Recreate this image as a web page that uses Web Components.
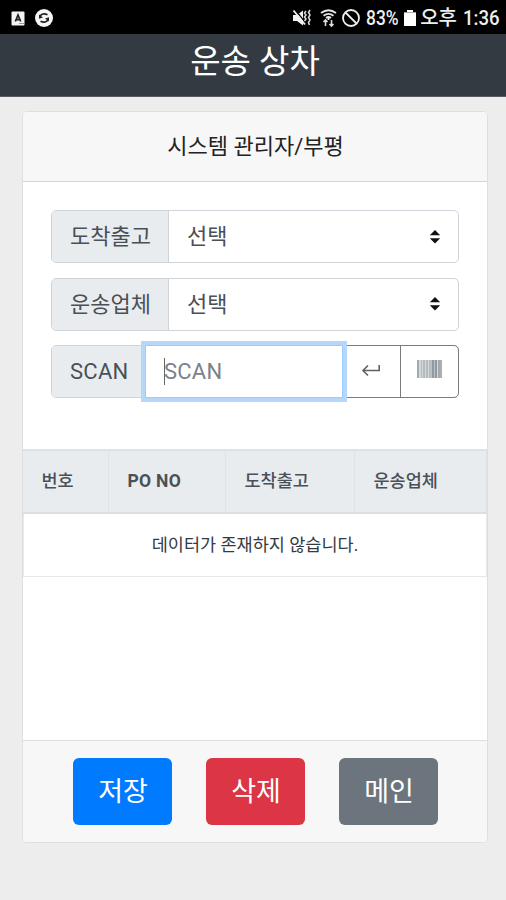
<!DOCTYPE html>
<html lang="ko">
<head>
<meta charset="utf-8">
<title>운송 상차</title>
<style>
html,body{margin:0;height:100%}
body{background:#ededed;font-family:Roboto,"Noto Sans CJK KR",sans-serif;color:#212529;overflow:hidden}
</style>
</head>
<body>
<shipping-app></shipping-app>
<script>
function define(name, html) {
  const template = document.createElement('template');
  template.innerHTML = html;
  customElements.define(name, class extends HTMLElement {
    constructor() {
      super();
      this.attachShadow({mode: 'open'}).appendChild(template.content.cloneNode(true));
    }
  });
}

define('status-bar', `
<style>
:host{display:flex;box-sizing:border-box;height:34px;background:#000;color:#eee;align-items:center;padding:2px 6px 0 11px;font-size:20px;line-height:30px;white-space:nowrap}
svg{display:block;flex:none}
.gap{flex:1}
.pct{width:36px;margin-left:5px;display:flex;font-weight:500}
.ampm{margin-left:4px;font-weight:500}
.time{margin-left:6px;width:37px;display:flex;font-weight:500}
.fit{transform:scaleX(.87);transform-origin:0 50%}
</style>
<svg width="14" height="15" viewBox="0 0 14 15"><rect x=".5" y=".5" width="13" height="14" rx="1" fill="#f4f4f4"/><path d="M4.300 10.500 7 4l2.700 6.500M5.200 8.600h3.600" stroke="#222" stroke-width="1.700" fill="none"/><path d="M8 12.500h5" stroke="#999"/></svg>
<svg width="20" height="20" viewBox="0 0 20 20" style="margin-left:9px"><circle cx="10" cy="10" r="9" fill="#f6f6f6"/><path d="M6 8.500c1-2.500 4-3.500 7.500-1.800M14 11.500c-1 2.500-4 3.500-7.500 1.800" stroke="#222" stroke-width="1.700" fill="none"/><path d="M5 6.500v4.300l4-1.300zM15 13.500V9.200l-4 1.300z" fill="#222"/></svg>
<span class="gap"></span>
<svg width="20" height="20" viewBox="0 0 20 20"><path d="M1 7h4l6-4.500v15L5 13H1z" fill="#f2f2f2"/><path d="m3 1.500 11 14" stroke="#000" stroke-width="1.300"/><path d="m1.500 2.500 11.500 14" stroke="#eee" stroke-width="1.900"/><path d="m14 3-1.500 2 1.500 2-1.500 2 1.500 2-1.500 2M18 2l-1.500 2.500 1.500 2.500-1.500 2.500 1.500 2.500-1.500 2.500 1 2.500" stroke="#ddd" stroke-width="1.500" fill="none"/></svg>
<svg width="17" height="20" viewBox="0 0 17 20" style="margin-left:8px"><path d="M1 5q7.500-5.500 15 0M3.500 7.700q5-3.700 10 0M6 10q2.500-2 5 0" stroke="#e5e5e5" stroke-width="1.800" fill="none"/><path d="M8.500 9v3" stroke="#eee" stroke-width="2"/><path d="M5.500 18v-6M3.500 14l2-2 2 2M11.500 12v6M9.500 16l2 2 2-2" stroke="#ddd" stroke-width="1.600" fill="none"/></svg>
<svg width="20" height="20" viewBox="0 0 20 20" style="margin-left:4px"><circle cx="10" cy="10" r="8" stroke="#eee" stroke-width="1.800" fill="none"/><path d="m4.500 4.500 11 11" stroke="#eee" stroke-width="1.800"/></svg>
<span class="pct"><span class="fit">83%</span></span>
<svg width="12" height="18" viewBox="0 0 12 18" style="margin-left:2px"><path d="M0 3h3V1h6v2h3v14H0z" fill="#fff"/><path d="M0 3.500h12" stroke="#aaa"/></svg>
<span class="ampm">오후</span><span class="time"><span class="fit" style="transform:scaleX(.93)">1:36</span></span>
`);

define('app-title', `
<style>
:host{display:flex;box-sizing:border-box;height:63px;background:#343a42;color:#fff;justify-content:center;font-size:33px;line-height:50px;padding:2.500px 0 0 4px;border-bottom:1px solid #565b62}
</style><slot></slot>`);

define('data-card', `
<style>
:host{display:flex;flex-direction:column;box-sizing:border-box;margin:14px 18px 0 22px;height:732px;background:#fff;border:1px solid #dfdfdf;border-radius:5px;overflow:hidden}
header{box-sizing:border-box;height:70px;flex:none;background:#f7f7f7;border-bottom:1px solid #d6d6d6;text-align:center;font-size:22px;line-height:69px;color:#222;padding-left:1px}
main{flex:1}
footer{box-sizing:border-box;height:102px;flex:none;background:#f7f7f7;border-top:1px solid #dedede;display:flex;gap:34px;padding:17px 0 0 50px}
</style>
<header><slot name="header"></slot></header><main><slot></slot></main><footer><slot name="footer"></slot></footer>`);

define('input-row', `
<style>
:host{display:flex;box-sizing:border-box;height:53px;border:1px solid #ced4da;border-radius:5px;background:#fff;font-size:22px;line-height:51px;color:#495057;position:relative}
.label{box-sizing:border-box;background:#e9ecef;border-right:1px solid #ced4da;padding:0 17px 0 18px;border-radius:4px 0 0 4px;white-space:nowrap}
</style><span class="label"><slot name="label"></slot></span><slot></slot>`);

define('select-box', `
<style>
:host{display:flex;flex:1;align-items:center;justify-content:space-between;padding:0 17.500px 0 18px}
svg{display:block}
</style><slot></slot><svg width="12" height="14" viewBox="0 0 12 14"><path d="M.8 5.200 6 0l5.200 5.200zM.8 8.300h10.400L6 13.500z" fill="#111"/></svg>`);

define('scan-input', `
<style>
:host{display:block;box-sizing:border-box;width:198px;margin:-1px 0 -1px -1.500px;height:53px;background:#fff;border:1px solid #9bcdfc;box-shadow:0 0 0 4px #b4d7fa;padding-left:18px;line-height:51px;color:#7b8188;position:relative;letter-spacing:.25px}
i{position:absolute;left:18px;top:12px;width:1px;height:27px;background:#666}
</style><i></i><slot></slot>`);

define('icon-button', `
<style>
:host{display:flex;box-sizing:border-box;margin:-1px 0;height:53px;width:58px;border:1px solid #777c81;border-left-width:0;align-items:center;justify-content:center;padding-bottom:3px}
:host([last]){flex:1;border-left-width:1px;margin-left:-1px;margin-right:-1px;border-radius:0 5px 5px 0;padding-bottom:5px}
</style><slot></slot>`);

define('data-table', `
<style>
:host{display:block;margin-top:51px;color:#343a40;font-size:17.500px}
.head{display:grid;grid-template-columns:86px 117px 129px 1fr;box-sizing:border-box;height:65px;background:#e9ecef;border-top:2px solid #dee2e5;border-bottom:2px solid #dbdfe2;line-height:60px;font-weight:500;color:#495057}
.head span{padding-left:18.500px;border-right:1px solid #dfe3e7}
.head span:last-child{border-color:#dee2e6}
.empty{box-sizing:border-box;height:63px;border:1px solid #e6e8ea;border-top:0;text-align:center;line-height:62px}
</style>
<div class="head"><span>번호</span><span style="font-weight:700;letter-spacing:.3px">PO NO</span><span>도착출고</span><span>운송업체</span></div>
<div class="empty">데이터가 존재하지 않습니다.</div>`);

define('action-button', `
<style>
:host{display:block;box-sizing:border-box;width:99px;height:67px;border-radius:6px;background:var(--tone);color:#fff;font-size:27px;line-height:68px;text-align:center;padding-left:1px}
</style><slot></slot>`);

define('shipping-app', `
<style>
:host{display:block}
.form{display:flex;flex-direction:column;gap:14.500px;padding:28px 28px 0 28px}
.bar{display:block}
</style>
<status-bar></status-bar>
<app-title>운송 상차</app-title>
<data-card>
  <span slot="header">시스템 관리자/부평</span>
  <div class="form">
    <input-row><span slot="label">도착출고</span><select-box>선택</select-box></input-row>
    <input-row><span slot="label">운송업체</span><select-box>선택</select-box></input-row>
    <input-row><span slot="label" style="letter-spacing:.25px">SCAN</span><scan-input>SCAN</scan-input>
      <icon-button><svg width="20" height="16" viewBox="0 0 20 16"><path d="M18.200 3v5.500H2M7 3.500 2 8.500l5 5" stroke="#5c6268" stroke-width="1.600" fill="none"/></svg></icon-button>
      <icon-button last><svg class="bar" width="25" height="18" viewBox="0 0 25 18"><path d="M0 0h2v18H0zM20 0h3v18h-3z" fill="#a4abae"/><path d="M4 0h1v18H4zM6 0h2v18H6zM9 0h2v18H9zM12 0h1v18h-1z" fill="#b5babd"/><path d="M13 0h5v18h-5z" fill="#b9c1c6"/><path d="M15 0h2v18h-2zM18 0h2v18h-2z" fill="#929aa0"/><path d="M2 0h2v18H2zM5 0h1v18H5zM8 0h1v18H8zM11 0h1v18h-1zM20 0h1v18h-1z" fill="#d3d8da"/><path d="M23 0h2v18h-2z" fill="#a9b0b4"/></svg></icon-button>
    </input-row>
  </div>
  <data-table></data-table>
  <action-button slot="footer" style="--tone:#007bff">저장</action-button>
  <action-button slot="footer" style="--tone:#dc3545">삭제</action-button>
  <action-button slot="footer" style="--tone:#6c757d">메인</action-button>
</data-card>`);
</script>
</body>
</html>
